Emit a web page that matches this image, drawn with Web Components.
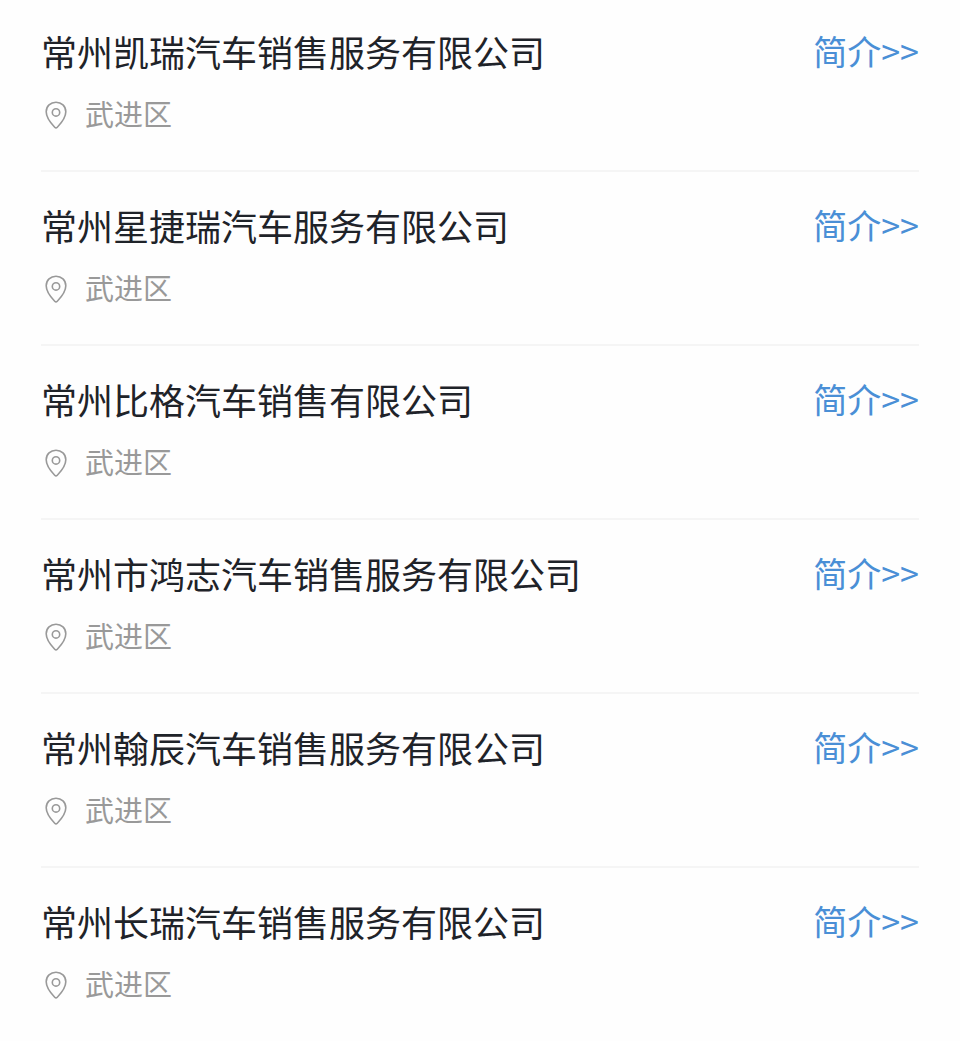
<!DOCTYPE html>
<html lang="zh-CN">
<head>
<meta charset="utf-8">
<meta name="viewport" content="width=device-width, initial-scale=1">
<title>常州汽车销售服务公司</title>
<style>
    body{
        margin: 0;
        background: #fefefe;
        font-family: "Noto Sans CJK SC", sans-serif;
    }
</style>
</head>
<body>
<company-list>
    <company-item district="武进区">常州凯瑞汽车销售服务有限公司</company-item>
    <company-item district="武进区">常州星捷瑞汽车服务有限公司</company-item>
    <company-item district="武进区">常州比格汽车销售有限公司</company-item>
    <company-item district="武进区">常州市鸿志汽车销售服务有限公司</company-item>
    <company-item district="武进区">常州翰辰汽车销售服务有限公司</company-item>
    <company-item district="武进区">常州长瑞汽车销售服务有限公司</company-item>
</company-list>

<script>
class LocationPin extends HTMLElement{

    constructor(){
        super()
        this.attachShadow({mode: 'open'}).innerHTML = `
            <style>
                :host{
                    display: block;
                    padding-top: 4px;
                }

                svg{
                    display: block;
                    fill: none;
                    stroke: currentColor;
                    stroke-width: 1.6;
                    stroke-linejoin: round;
                }
            </style>
            <svg width="22" height="28" viewBox="0 0 22 28" aria-hidden="true">
                <path d="M11 1.2C5.5 1.2 1.2 5.3 1.2 10.8C1.2 16.2 5 21.4 9.7 26.2Q11 27.5 12.3 26.2C17 21.4 20.8 16.2 20.8 10.8C20.8 5.3 16.5 1.2 11 1.2Z"/>
                <circle cx="11" cy="11.4" r="3.7"/>
            </svg>
        `
    }
}

class CompanyItem extends HTMLElement{

    constructor(){
        super()
        this.attachShadow({mode: 'open'}).innerHTML = `
            <style>
                :host{
                    display: block;
                    padding: 27px 0 37px;
                    border-bottom: 2px solid #f5f5f5;
                }

                :host(:first-child){
                    padding-top: 25px;
                }

                :host(:last-child){
                    border-bottom: 0;
                }

                .head{
                    display: flex;
                    justify-content: space-between;
                    align-items: center;
                    gap: 24px;
                }

                h2{
                    margin: 0;
                    color: #1f2329;
                    font-size: 36px;
                    font-weight: 400;
                    line-height: 52px;
                }

                a{
                    flex: none;
                    color: #4a8fd6;
                    font-size: 34px;
                    line-height: 52px;
                    text-decoration: none;
                }

                .place{
                    display: flex;
                    align-items: center;
                    gap: 18px;
                    margin-top: 16px;
                    padding-left: 4px;
                    color: #999;
                    font-size: 29px;
                    line-height: 40px;
                }
            </style>
            <div class="head">
                <h2 id="name"><slot></slot></h2>
                <a href="#" id="intro" aria-labelledby="name intro">简介&gt;&gt;</a>
            </div>
            <div class="place">
                <location-pin></location-pin>
                <span class="district"></span>
            </div>
        `
    }

    connectedCallback(){
        this.shadowRoot.querySelector('.district').textContent = this.getAttribute('district')
    }
}

class CompanyList extends HTMLElement{

    constructor(){
        super()
        this.attachShadow({mode: 'open'}).innerHTML = `
            <style>
                :host{
                    display: block;
                    padding: 0 41px;
                }
            </style>
            <slot></slot>
        `
    }
}

customElements.define('location-pin', LocationPin)
customElements.define('company-item', CompanyItem)
customElements.define('company-list', CompanyList)
</script>
</body>
</html>
